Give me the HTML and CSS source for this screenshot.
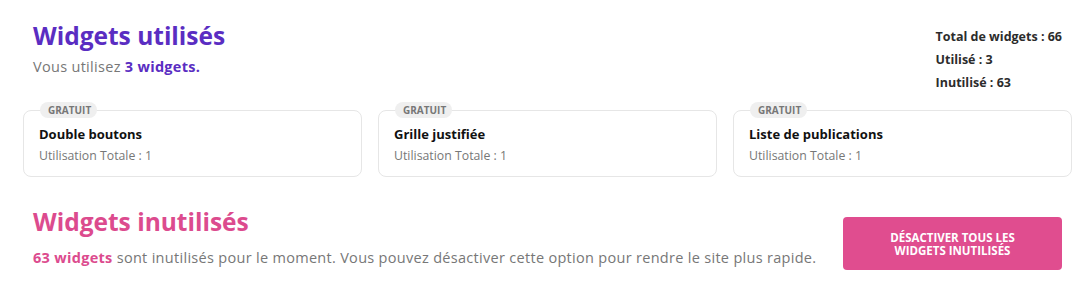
FILE: index.html
```html
<!DOCTYPE html>
<html lang="fr">
<head>
<meta charset="utf-8">
<link rel="stylesheet" href="styles.css">
</head>
<body>
<div class="page">
  <section class="used">
    <div class="used-head">
      <div>
        <h1 class="title title-used">Widgets utilisés</h1>
        <p class="lead">Vous utilisez <strong class="hl-used">3 widgets.</strong></p>
      </div>
      <ul class="stats">
        <li>Total de widgets : 66</li>
        <li>Utilisé : 3</li>
        <li>Inutilisé : 63</li>
      </ul>
    </div>
    <div class="cards">
      <div class="card">
        <span class="badge">GRATUIT</span>
        <div class="card-name">Double boutons</div>
        <div class="card-use">Utilisation Totale : 1</div>
      </div>
      <div class="card">
        <span class="badge">GRATUIT</span>
        <div class="card-name">Grille justifiée</div>
        <div class="card-use">Utilisation Totale : 1</div>
      </div>
      <div class="card">
        <span class="badge">GRATUIT</span>
        <div class="card-name">Liste de publications</div>
        <div class="card-use">Utilisation Totale : 1</div>
      </div>
    </div>
  </section>
  <section class="unused">
    <div>
      <h2 class="title title-unused">Widgets inutilisés</h2>
      <p class="lead"><strong class="hl-unused">63 widgets</strong> sont inutilisés pour le moment. Vous pouvez désactiver cette option pour rendre le site plus rapide.</p>
    </div>
    <button class="btn"><span class="btn-line">DÉSACTIVER TOUS LES</span><span class="btn-line">WIDGETS INUTILISÉS</span></button>
  </section>
</div>
</body>
</html>
```
FILE: styles.css
```css
* { box-sizing: border-box; }
body {
  margin: 0;
  background: #fff;
  font-family: "Open Sans", "Lato", sans-serif;
  color: #333;
}
.page {
  padding: 19px 17px 0 23px;
}
.used-head {
  display: flex;
  justify-content: space-between;
  padding: 0 10px;
}
.title {
  margin: 0;
  font-size: 24.5px;
  line-height: 33px;
  font-weight: 700;
}
.title-used { color: #5a2dc2; }
.title-unused { color: #dc4b8e; }
.lead {
  margin: 5px 0 0;
  font-size: 14.5px;
  line-height: 20px;
  letter-spacing: 0.3px;
  color: #777;
}
.hl-used { color: #5a2dc2; font-weight: 700; }
.hl-unused { color: #dc4b8e; font-weight: 700; }
.stats {
  list-style: none;
  margin: 6px 0 0;
  padding: 0;
  font-size: 12.5px;
  font-weight: 700;
  color: #2c2c2c;
  line-height: 23px;
}
.cards {
  display: grid;
  grid-template-columns: repeat(3, 1fr);
  gap: 16px;
  margin-top: 16px;
}
.card {
  position: relative;
  border: 1px solid #e6e6e6;
  border-radius: 8px;
  padding: 14px 15px 13px;
  height: 67px;
}
.badge {
  position: absolute;
  top: -9px;
  left: 16px;
  background: #efefef;
  border-radius: 8px;
  font-size: 10px;
  font-weight: 700;
  color: #777;
  padding: 2px 6px 2px 8px;
  line-height: 12px;
}
.card-name {
  font-size: 13px;
  font-weight: 700;
  color: #111;
  line-height: 18px;
}
.card-use {
  font-size: 12.3px;
  color: #777;
  line-height: 18px;
  margin-top: 4px;
}
.unused {
  display: flex;
  justify-content: space-between;
  align-items: flex-start;
  padding: 0 10px;
  margin-top: 28px;
}
.unused .lead { margin-top: 10px; }
.btn {
  margin-top: 12px;
  width: 219px;
  height: 53px;
  background: #e04d8f;
  border: none;
  border-radius: 4px;
  color: #fff;
  font-family: inherit;
  font-size: 11.5px;
  font-weight: 700;
  line-height: 13px;
  padding: 0;
  display: flex;
  flex-direction: column;
  align-items: center;
  justify-content: center;
}
.btn-line { display: block; }
```
